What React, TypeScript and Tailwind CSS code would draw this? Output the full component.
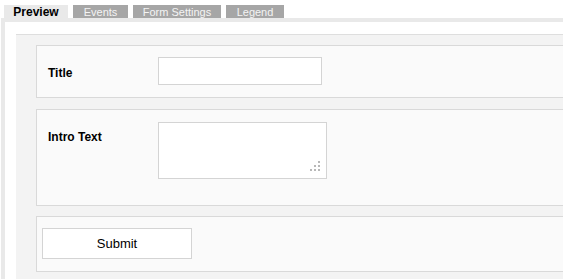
import React from 'react';

const tabs = [
  { label: 'Events', w: 'w-[55px]' },
  { label: 'Form Settings', w: 'w-[88px]' },
  { label: 'Legend', w: 'w-[58px]' },
];

const App: React.FC = () => {
  return (
    <div className="w-[563px] h-[279px] overflow-hidden bg-white font-['Liberation_Sans',Arial,sans-serif]">
      <div className="w-[700px]">
        {/* tab strip */}
        <div className="flex gap-[5px] pl-[4px] pt-[5px]">
          <div className="h-[13px] w-[64px] bg-[#e9e9e9] text-[12px] leading-[14px] font-bold text-black text-center">
            Preview
          </div>
          {tabs.map((t) => (
            <div
              key={t.label}
              className={`${t.w} h-[13px] bg-[#a6a6a6] text-[11px] leading-[14px] text-[#f4f4f4] text-center whitespace-nowrap`}
            >
              {t.label}
            </div>
          ))}
        </div>

        <div className="ml-[1px] border-l-4 border-t-4 border-[#e9e9e9] pl-[11px] pt-[12px]">
          <div className="border-t border-[#dedede] bg-[#f3f3f3] pl-[20px] pt-[10px] pb-[20px]">
            {/* Title */}
            <div className="flex items-start border border-[#d9d9d9] bg-[#fafafa] pl-[11px] pt-[11px] pb-[12px]">
              <label className="w-[110px] h-[28px] pt-[3px] flex items-center text-[12px] font-bold text-black">Title</label>
              <input
                type="text"
                className="w-[164px] h-[28px] border border-[#d4d4d4] bg-white outline-none"
              />
            </div>

            {/* Intro Text */}
            <div className="mt-[11px] flex items-start border border-[#d9d9d9] bg-[#fafafa] pl-[11px] pt-[12px] pb-[26px]">
              <label className="w-[110px] h-[28px] pt-[2px] flex items-center text-[12px] font-bold text-black">Intro Text</label>
              <div className="relative">
                <textarea className="block w-[169px] h-[57px] border border-[#d4d4d4] bg-white resize-none outline-none" />
                <svg className="absolute right-[7px] bottom-[7px]" width="10" height="11" viewBox="0 0 10 11">
                  <rect x="8" y="0" width="2" height="2" fill="#b8b8b8" />
                  <rect x="4" y="4" width="2" height="2" fill="#b8b8b8" />
                  <rect x="8" y="4" width="2" height="2" fill="#b8b8b8" />
                  <rect x="0" y="8" width="2" height="2" fill="#b8b8b8" />
                  <rect x="4" y="8" width="2" height="2" fill="#b8b8b8" />
                  <rect x="8" y="8" width="2" height="2" fill="#b8b8b8" />
                </svg>
              </div>
            </div>

            {/* Submit */}
            <div className="mt-[10px] border border-[#d9d9d9] bg-[#fafafa] pl-[5px] pt-[11px] pb-[12px]">
              <button className="w-[150px] h-[31px] pt-[1px] border border-[#d4d4d4] bg-white text-[13px] text-black">
                Submit
              </button>
            </div>
          </div>
        </div>
      </div>
    </div>
  );
};

export default App;
